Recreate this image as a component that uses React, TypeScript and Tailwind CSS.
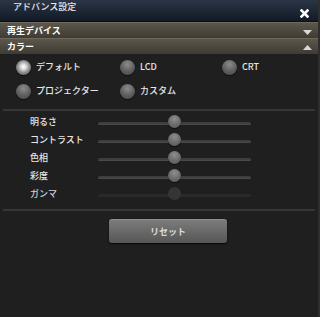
import React from 'react';

const jp = { fontFamily: '"Noto Sans CJK JP", "Noto Sans", sans-serif' };

function Radio({ label, checked }: { label: string; checked?: boolean }) {
  return (
    <div className="flex items-center h-[24px]">
      <div
        className={`w-[15px] h-[15px] rounded-full shadow-[0_1px_1px_rgba(0,0,0,0.6)] ${
          checked
            ? 'bg-[radial-gradient(circle_at_50%_45%,#ffffff_0,#e0e0e0_22%,#8a8a8a_55%,#505050_100%)]'
            : 'bg-[radial-gradient(circle_at_50%_30%,#8c8c8c_0,#5e5e5e_55%,#454545_100%)]'
        }`}
      />
      <span className="ml-[5px] text-[9px] text-[#e6e6e6] font-medium">{label}</span>
    </div>
  );
}

function SliderRow({ label, disabled }: { label: string; disabled?: boolean }) {
  return (
    <div className="flex items-center h-[18px]">
      <span className={`w-[98px] pl-[30px] text-[9px] font-medium whitespace-nowrap ${disabled ? 'text-[#cfcfcf]' : 'text-[#e6e6e6]'}`}>
        {label}
      </span>
      <div className="relative w-[153px] h-[13px] mt-[3px] flex items-center">
        <div
          className={`w-full h-[3px] rounded-full ${
            disabled ? 'bg-[#2a2a2a]' : 'bg-[#3e3e3e] border-b border-[#4a4a4a]'
          }`}
        />
        <div
          className={`absolute left-[70px] top-[-2px] w-[13px] h-[13px] rounded-full ${
            disabled
              ? 'bg-[#353535]'
              : 'bg-[radial-gradient(circle_at_50%_30%,#8e8e8e_0,#6a6a6a_55%,#555_100%)] shadow-[0_1px_1px_rgba(0,0,0,0.6)]'
          }`}
        />
      </div>
    </div>
  );
}

export default function App() {
  return (
    <div className="w-[320px] h-[317px] bg-[#1f1f1f] border-r-2 border-[#2e2e2e] overflow-hidden" style={jp}>
      {/* Title bar */}
      <div className="h-[22px] flex justify-between bg-gradient-to-b from-[#2b3545] to-[#121a26] border-b border-[#0b0f16]">
        <span className="pl-[13px] text-[9px] font-medium text-[#e8e8e8] leading-[14px]">アドバンス設定</span>
        <svg className="mt-[9px] mr-[9px]" width="9" height="9" viewBox="0 0 9 9">
          <path d="M1.5 1.5 L7.5 7.5 M7.5 1.5 L1.5 7.5" stroke="#ffffff" strokeWidth="2.6" strokeLinecap="square" />
        </svg>
      </div>

      {/* Section headers */}
      <div className="h-[16px] flex items-center justify-between bg-gradient-to-b from-[#5c574c] to-[#3f3b33] border-t border-[#6e695c]">
        <span className="pl-[7px] text-[9px] font-bold text-white">再生デバイス</span>
        <svg className="mr-[6px] mt-[3px]" width="9" height="5" viewBox="0 0 9 5">
          <path d="M0 0 H9 L4.5 5 Z" fill="#d8d8d8" />
        </svg>
      </div>
      <div className="h-[16px] flex items-center justify-between bg-gradient-to-b from-[#5c574c] to-[#3f3b33] border-t border-[#6e695c]">
        <span className="pl-[7px] text-[9px] font-bold text-white">カラー</span>
        <svg className="mr-[6px] mt-[2px]" width="9" height="5" viewBox="0 0 9 5">
          <path d="M0 5 H9 L4.5 0 Z" fill="#d8d8d8" />
        </svg>
      </div>

      {/* Radio options */}
      <div className="grid grid-cols-[104px_102px_auto] pl-[16px] pt-[1px] pb-[6px]">
        <Radio label="デフォルト" checked />
        <Radio label="LCD" />
        <Radio label="CRT" />
        <Radio label="プロジェクター" />
        <Radio label="カスタム" />
      </div>

      <div className="mx-[3px] h-[2px] bg-[#363636]" />

      {/* Sliders */}
      <div className="pt-[2px] pb-[6px]">
        <SliderRow label="明るさ" />
        <SliderRow label="コントラスト" />
        <SliderRow label="色相" />
        <SliderRow label="彩度" />
        <SliderRow label="ガンマ" disabled />
      </div>

      <div className="mx-[3px] h-[2px] bg-[#363636]" />

      <button className="ml-[109px] mt-[8px] w-[118px] h-[24px] rounded-[3px] bg-gradient-to-b from-[#7c7c7c] to-[#565656] border-t border-[#8e8e8e] shadow-[0_1px_2px_rgba(0,0,0,0.8)] text-[9px] font-bold text-[#dcdcdc]">
        リセット
      </button>
    </div>
  );
}
